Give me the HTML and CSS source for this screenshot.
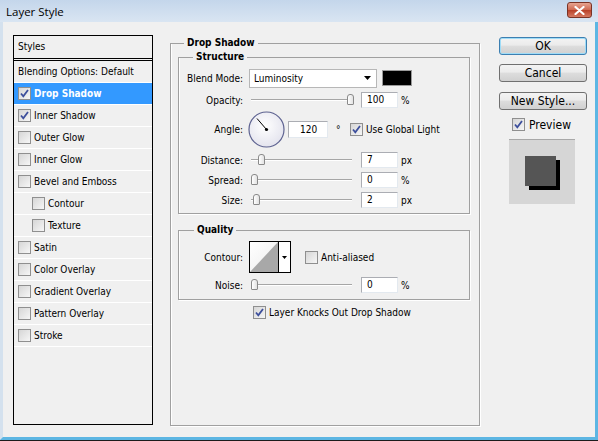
FILE: index.html
```html
<!DOCTYPE html>
<html lang="en">

<head>
    <meta charset="UTF-8">
    <title>Layer Style</title>
    <link rel="stylesheet" href="styles.css">
</head>

<body>
    <div class="window">
        <div class="titlebar">
            <span class="title">Layer Style</span>
            <span class="close">
                <svg width="11" height="9" viewBox="0 0 11 9"><path d="M1.5 1 L9.5 8 M9.5 1 L1.5 8" stroke="#fff" stroke-width="2.2" stroke-linecap="round"/></svg>
            </span>
        </div>

        <div class="frame">
            <!-- styles list -->
            <div class="styles">
                <div class="styles-head">Styles</div>
                <ul class="style-list">
                    <li>Blending Options: Default</li>
                    <li class="active"><span class="check on"><svg width="11" height="11" viewBox="0 0 11 11"><path d="M2 5.5 L4.3 8.3 L9 2" fill="none" stroke="#3d4f9c" stroke-width="1.8"/></svg></span>Drop Shadow</li>
                    <li><span class="check on"><svg width="11" height="11" viewBox="0 0 11 11"><path d="M2 5.5 L4.3 8.3 L9 2" fill="none" stroke="#3d4f9c" stroke-width="1.8"/></svg></span>Inner Shadow</li>
                    <li><span class="check"></span>Outer Glow</li>
                    <li><span class="check"></span>Inner Glow</li>
                    <li><span class="check"></span>Bevel and Emboss</li>
                    <li class="sub-item"><span class="check"></span>Contour</li>
                    <li class="sub-item"><span class="check"></span>Texture</li>
                    <li><span class="check"></span>Satin</li>
                    <li><span class="check"></span>Color Overlay</li>
                    <li><span class="check"></span>Gradient Overlay</li>
                    <li><span class="check"></span>Pattern Overlay</li>
                    <li><span class="check"></span>Stroke</li>
                </ul>
            </div>

            <!-- settings -->
            <fieldset class="group main">
                <legend>Drop Shadow</legend>

                <fieldset class="group sub structure">
                    <legend>Structure</legend>
                    <div class="row row-blend">
                        <span class="label">Blend Mode:</span>
                        <span class="select">Luminosity<svg width="7" height="4" viewBox="0 0 7 4"><path d="M0 0 H7 L3.5 4 Z" fill="#000"/></svg></span>
                        <span class="color"></span>
                    </div>
                    <div class="row">
                        <span class="label">Opacity:</span>
                        <span class="slider"><span class="thumb" style="left: 96px"></span></span>
                        <span class="field">100</span>
                        <span class="unit">%</span>
                    </div>
                    <div class="row row-angle">
                        <span class="label">Angle:</span>
                        <svg class="dial" width="37" height="37" viewBox="0 0 37 37">
                            <defs>
                                <radialGradient id="dialfill" cx="0.45" cy="0.4" r="0.6">
                                    <stop offset="0" stop-color="#ffffff"/>
                                    <stop offset="1" stop-color="#e4e4ee"/>
                                </radialGradient>
                            </defs>
                            <circle cx="18.5" cy="18.5" r="17.5" fill="url(#dialfill)" stroke="#5d6290" stroke-width="1.2"/>
                            <line x1="18.5" y1="18.5" x2="9" y2="7.5" stroke="#000" stroke-width="1"/>
                            <circle cx="18.5" cy="18.5" r="1.6" fill="#000"/>
                        </svg>
                        <span class="field field-angle">120</span>
                        <span class="deg">°</span>
                        <span class="check on"><svg width="11" height="11" viewBox="0 0 11 11"><path d="M2 5.5 L4.3 8.3 L9 2" fill="none" stroke="#3d4f9c" stroke-width="1.8"/></svg></span>
                        <span class="check-text">Use Global Light</span>
                    </div>
                    <div class="row">
                        <span class="label">Distance:</span>
                        <span class="slider"><span class="thumb" style="left: 7px"></span></span>
                        <span class="field">7</span>
                        <span class="unit">px</span>
                    </div>
                    <div class="row">
                        <span class="label">Spread:</span>
                        <span class="slider"><span class="thumb" style="left: 0px"></span></span>
                        <span class="field">0</span>
                        <span class="unit">%</span>
                    </div>
                    <div class="row">
                        <span class="label">Size:</span>
                        <span class="slider"><span class="thumb" style="left: 2px"></span></span>
                        <span class="field">2</span>
                        <span class="unit">px</span>
                    </div>
                </fieldset>

                <fieldset class="group sub quality">
                    <legend>Quality</legend>
                    <div class="row row-contour">
                        <span class="label">Contour:</span>
                        <span class="contour">
                            <svg class="curve" width="28" height="30" viewBox="0 0 28 30"><path d="M0 30 L28 0 V30 Z" fill="#a8a8a8"/></svg>
                            <span class="drop"><svg width="5" height="3" viewBox="0 0 5 3"><path d="M0 0 H5 L2.5 3 Z" fill="#000"/></svg></span>
                        </span>
                        <span class="check check-anti"></span>
                        <span class="check-text">Anti-aliased</span>
                    </div>
                    <div class="row">
                        <span class="label">Noise:</span>
                        <span class="slider"><span class="thumb" style="left: 0px"></span></span>
                        <span class="field">0</span>
                        <span class="unit">%</span>
                    </div>
                </fieldset>

                <div class="knock">
                    <span class="check on"><svg width="11" height="11" viewBox="0 0 11 11"><path d="M2 5.5 L4.3 8.3 L9 2" fill="none" stroke="#3d4f9c" stroke-width="1.8"/></svg></span>
                    <span class="check-text">Layer Knocks Out Drop Shadow</span>
                </div>
            </fieldset>

            <!-- buttons + preview -->
            <div class="side">
                <div class="btn default">OK</div>
                <div class="btn">Cancel</div>
                <div class="btn btn-new">New Style...</div>
                <div class="preview-row">
                    <span class="check on"><svg width="11" height="11" viewBox="0 0 11 11"><path d="M2 5.5 L4.3 8.3 L9 2" fill="none" stroke="#3d4f9c" stroke-width="1.8"/></svg></span>
                    <span class="preview-text">Preview</span>
                </div>
                <div class="preview">
                    <div class="preview-square"></div>
                </div>
            </div>
        </div>
    </div>
</body>

</html>
```

FILE: styles.css
```css
html,
body {
    margin: 0;
    padding: 0;
}

body {
    width: 598px;
    height: 441px;
    overflow: hidden;
    background-color: #1c1c1c;
    font-family: "DejaVu Sans Condensed", "Liberation Sans", sans-serif;
    font-size: 10px;
    color: #000;
}

.window {
    width: 598px;
    height: 440px;
    display: flex;
    flex-direction: column;
}

/* title bar */
.titlebar {
    height: 22px;
    flex: none;
    box-sizing: border-box;
    padding: 0 6px 0 6px;
    display: flex;
    align-items: center;
    justify-content: space-between;
    background: linear-gradient(#c4d6eb, #d9e5f2);
}

.title {
    font-family: "Open Sans", sans-serif;
    font-size: 11.5px;
}

.close {
    width: 25px;
    height: 16px;
    margin-top: -2px;
    box-sizing: border-box;
    border: 1px solid #7a3326;
    border-radius: 3px;
    display: flex;
    align-items: center;
    justify-content: center;
    background: linear-gradient(#e7a491, #cf6a52 48%, #b94129 52%, #d67a62);
}

.frame {
    flex: 1;
    display: flex;
    align-items: flex-start;
    background-color: #f0f0f0;
    border-left: 3px solid #d4e1ee;
    border-right: 3px solid #5db6e3;
    border-bottom: 3px solid #5db6e3;
    padding: 13px 0 0 10px;
}

/* checkbox */
.check {
    width: 13px;
    height: 13px;
    flex: none;
    box-sizing: border-box;
    border: 1px solid #8f8f8f;
    background: linear-gradient(135deg, #d6d6d6, #f6f6f6);
    display: inline-flex;
    align-items: center;
    justify-content: center;
}

.check-text {
    margin-left: 3px;
    white-space: nowrap;
}

/* styles list */
.styles {
    width: 140px;
    height: 390px;
    flex: none;
    box-sizing: border-box;
    border: 1px solid #000;
}

.styles-head {
    height: 22px;
    line-height: 22px;
    padding-left: 4px;
    border-bottom: 3px double #000;
}

.style-list {
    list-style: none;
    margin: 0;
    padding: 0;
}

.style-list li {
    height: 21px;
    border-bottom: 1px solid #fff;
    padding-left: 4px;
    display: flex;
    align-items: center;
    white-space: nowrap;
}

.style-list li .check {
    margin-right: 3px;
}

.style-list li.sub-item {
    padding-left: 18px;
}

.style-list li.active {
    background-color: #3399ff;
    color: #fff;
    font-weight: bold;
}

/* group boxes */
.group {
    margin: 0;
    padding: 0;
    min-width: 0;
    border: 1px solid #a0a0a0;
    box-shadow: 1px 1px 0 #fff, inset 1px 0 0 #fff;
}

.group legend {
    padding: 0 3px;
    line-height: 14px;
    font-weight: bold;
}

.main {
    width: 310px;
    height: 390px;
    box-sizing: border-box;
    margin: 1px 0 0 17px;
    flex: none;
}

.main > legend {
    margin-left: 13px;
}

.sub {
    width: 292px;
    box-sizing: border-box;
    margin-left: 7px;
}

.structure {
    padding-bottom: 5px;
}

.structure > legend {
    margin-left: 14px;
}

.quality {
    margin-top: 9px;
    padding-bottom: 6px;
}

.quality > legend {
    margin-left: 15px;
}

.row {
    display: flex;
    align-items: center;
    height: 16px;
    margin-top: 4px;
}

.label {
    width: 64px;
    flex: none;
    text-align: right;
}

.row-blend {
    height: 20px;
}

.select {
    width: 128px;
    height: 19px;
    margin-left: 6px;
    box-sizing: border-box;
    border: 1px solid #b7b7b7;
    background-color: #fff;
    padding: 0 5px 0 4px;
    display: flex;
    align-items: center;
    justify-content: space-between;
}

.color {
    width: 30px;
    height: 16px;
    margin-left: 5px;
    box-sizing: border-box;
    border: 1px solid #9a9a9a;
    background-color: #000;
}

.slider {
    position: relative;
    width: 101px;
    height: 16px;
    margin-left: 8px;
    flex: none;
}

.slider::before {
    content: "";
    position: absolute;
    left: 0;
    right: 0;
    top: 7px;
    height: 1px;
    background-color: #a6a6a6;
    box-shadow: 0 1px 0 #fff;
}

.thumb {
    position: absolute;
    top: 2px;
    width: 7px;
    height: 11px;
    box-sizing: border-box;
    border: 1px solid #8a8a8a;
    border-radius: 3px 3px 1px 1px;
    background: linear-gradient(90deg, #fff, #e2e2e2);
}

.field {
    width: 37px;
    height: 16px;
    margin-left: 9px;
    flex: none;
    box-sizing: border-box;
    border: 1px solid;
    border-color: #abadb3 #e3e9ef #e3e9ef #abadb3;
    background-color: #fff;
    padding-left: 5px;
    line-height: 14px;
}

.unit {
    margin-left: 3px;
}

.row-angle {
    height: 37px;
    margin-top: 3px;
}

.dial {
    margin-left: 5px;
    flex: none;
}

.field-angle {
    width: 40px;
    height: 17px;
    margin-left: 3px;
    padding-left: 11px;
    line-height: 15px;
}

.deg {
    margin-left: 8px;
    width: 6px;
}

.row-angle .check {
    margin-left: 8px;
}

.row-contour {
    height: 32px;
}

.contour {
    width: 42px;
    height: 32px;
    margin-left: 6px;
    flex: none;
    box-sizing: border-box;
    border: 1px solid #000;
    display: flex;
}

.curve {
    background: linear-gradient(135deg, #ffffff, #ececec);
}

.drop {
    flex: 1;
    border-left: 1px solid #000;
    background-color: #fff;
    display: flex;
    align-items: center;
    justify-content: center;
}

.check-anti {
    margin-left: 14px;
}

.knock {
    display: flex;
    align-items: center;
    height: 14px;
    margin-top: 5px;
    padding-left: 82px;
}

/* right column */
.side {
    width: 88px;
    flex: none;
    margin: 2px 0 0 19px;
    display: flex;
    flex-direction: column;
}

.btn {
    height: 18px;
    box-sizing: border-box;
    border: 1px solid #707070;
    border-radius: 3px;
    background: linear-gradient(#f3f3f3, #ebebeb 45%, #dddddd 50%, #d0d0d0);
    text-align: center;
    font-size: 12px;
    line-height: 16px;
    margin-top: 9px;
}

.btn.default {
    margin-top: 0;
    border-color: #3c7fb1;
    box-shadow: inset 0 0 0 1px #9fdcf7;
}

.btn-new {
    margin-top: 10px;
}

.preview-row {
    display: flex;
    align-items: center;
    height: 13px;
    margin: 8px 0 0 13px;
}

.preview-text {
    margin-left: 4px;
    font-size: 12px;
}

.preview {
    width: 66px;
    height: 65px;
    margin: 8px 0 0 10px;
    box-sizing: border-box;
    border-top: 1px solid #a8a8a8;
    background-color: #d6d6d6;
    display: flex;
    align-items: center;
    justify-content: center;
}

.preview-square {
    width: 31px;
    height: 30px;
    margin: 0 4px 2px 0;
    background-color: #555;
    box-shadow: 4px 4px 0 #000;
}
```
